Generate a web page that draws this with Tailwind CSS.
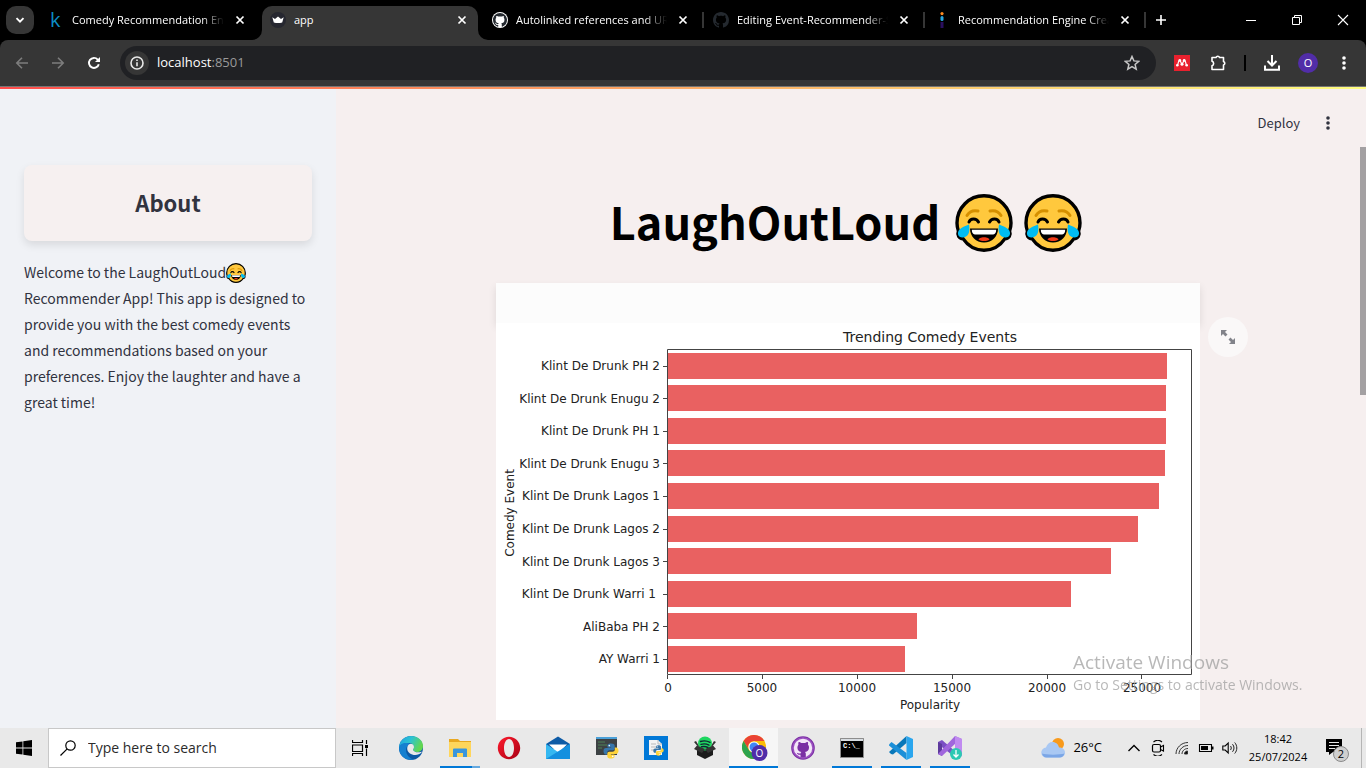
<!DOCTYPE html>
<html lang="en">
<head>
<meta charset="utf-8">
<meta name="viewport" content="width=device-width, initial-scale=1">
<title>app</title>
<script src="https://cdn.jsdelivr.net/npm/@tailwindcss/browser@4"></script>
</head>
<body class="flex h-screen flex-col overflow-hidden bg-black font-['Open_Sans',sans-serif] text-[11px] text-white">

<!-- Shared symbols -->
<svg class="hidden" aria-hidden="true">
  <symbol id="joy" viewBox="0 0 58 58">
    <path d="M29 1.800C14 1.800 2 13.800 2 29c0 3 .5 5.500 1.400 8-1.500 4 .6 7.500 4.600 7.600C13 52 20.500 56.200 29 56.200S45 52 50 44.600c4-.1 6.100-3.600 4.600-7.600.9-2.500 1.400-5 1.400-8C56 13.800 44 1.800 29 1.800Z" fill="#ffc83d" stroke="#000" stroke-width="3.400"/>
    <g fill="none" stroke-linecap="round">
      <path d="M12 21.500c2-3.500 6-5.500 11-4.500M46 21.500c-2-3.500-6-5.500-11-4.500" stroke="#d69000" stroke-width="3"/>
      <path d="M14 28c1.500-4 7.500-4 9.500 0M34.500 28c2-4 8-4 9.500 0" stroke="#000" stroke-width="3"/>
    </g>
    <path d="M14 30.500c1.500 8-1 13-6.500 13-4.500 0-6-4.500-3-8 2.500-2.500 5-3 9.500-5ZM44 30.500c-1.500 8 1 13 6.500 13 4.500 0 6-4.500 3-8-2.500-2.500-5-3-9.500-5Z" fill="#00bcf2"/>
    <path d="M15 34.500h28c0 8-6 14-14 14s-14-6-14-14Z" fill="#000"/>
    <path d="M16.800 35.800h24.400c0 2.800-1 4.600-3 4.600H19.800c-2 0-3-1.800-3-4.600Z" fill="#fff"/>
    <path d="M29 43.200c3 0 5.500 1.300 5.500 2.400-1.500 1-3.500 1.500-5.500 1.500s-4-.5-5.500-1.500C23.500 44.500 26 43.200 29 43.200Z" fill="#f03a17"/>
  </symbol>
  <symbol id="octo" viewBox="0 0 16 16">
    <path fill="currentColor" d="M8 0C3.580 0 0 3.580 0 8c0 3.540 2.290 6.530 5.470 7.590.4.07.55-.17.55-.38 0-.19-.01-.82-.01-1.490-2.010.37-2.530-.49-2.690-.94-.09-.23-.48-.94-.82-1.130-.28-.15-.68-.52-.01-.53.63-.01 1.080.58 1.230.82.72 1.210 1.870.87 2.330.66.07-.52.28-.87.51-1.070-1.780-.2-3.640-.89-3.640-3.950 0-.87.31-1.590.82-2.150-.08-.2-.36-1.020.08-2.120 0 0 .67-.21 2.200.82.64-.18 1.320-.27 2-.27.68 0 1.360.09 2 .27 1.530-1.040 2.200-.82 2.200-.82.44 1.100.16 1.920.08 2.120.51.56.82 1.270.82 2.150 0 3.070-1.870 3.750-3.650 3.950.29.25.54.73.54 1.480 0 1.070-.01 1.930-.01 2.200 0 .21.15.46.55.38A8.012 8.012 0 0 0 16 8c0-4.420-3.580-8-8-8Z"/>
  </symbol>
  <symbol id="x" viewBox="0 0 16 16"><path d="M4.500 4.500l7 7M11.500 4.500l-7 7" stroke="currentColor" stroke-width="1.700"/></symbol>
  <symbol id="dots" viewBox="0 0 16 16"><g fill="currentColor"><circle cx="8" cy="3" r="1.800"/><circle cx="8" cy="8" r="1.800"/><circle cx="8" cy="13" r="1.800"/></g></symbol>
  <symbol id="py" viewBox="0 0 16 16">
    <path d="M7.900.5c-3 0-3.400 1.200-3.400 2.300v1.700h3.600v.6H3C1.400 5.100.5 6.300.5 8.200s1 3.200 2.300 3.200h1.400V9.500c0-1.300 1-2.300 2.400-2.300h3.300c1 0 1.800-.8 1.800-1.900V2.800C11.700 1.300 10.300.5 7.900.5Z" fill="#3776ab"/>
    <path d="M8.100 15.500c3 0 3.400-1.200 3.400-2.300v-1.700H7.900v-.6H13c1.600 0 2.500-1.200 2.500-3.100s-1-3.200-2.300-3.200h-1.400v1.900c0 1.300-1 2.300-2.400 2.300H6.100c-1 0-1.800.8-1.800 1.900v2.500c0 1.500 1.400 2.300 3.800 2.300Z" fill="#ffd43b"/>
    <circle cx="6.300" cy="2.600" r=".8" fill="#fff"/><circle cx="9.700" cy="13.400" r=".8" fill="#fff"/>
  </symbol>
</svg>

<!-- Tab strip -->
<header class="flex h-10 shrink-0 items-stretch">
  <button aria-label="Search tabs" class="mt-[6px] ml-[6px] mr-[7px] flex size-7 shrink-0 items-center justify-center rounded-[10px] bg-[#363636]">
    <svg class="size-4" viewBox="0 0 16 16"><path d="M4.500 6.200 8 9.700l3.500-3.500" fill="none" stroke="#fff" stroke-width="1.900"/></svg>
  </button>
  <nav aria-label="Tabs" class="flex min-w-0 flex-1">
    <div class="relative flex max-w-[221px] min-w-0 flex-1 items-center gap-2 pl-[7px] pr-[14px]">
      <span class="w-4 shrink-0 pl-[2px] text-xl leading-6 font-medium text-[#0d8dc4]" aria-hidden="true">k</span>
      <a href="#" class="min-w-0 flex-1 overflow-hidden whitespace-nowrap [mask-image:linear-gradient(to_right,#000_85%,transparent)]">Comedy Recommendation Engine</a>
      <button aria-label="Close tab" class="size-4 shrink-0"><svg class="size-4"><use href="#x"/></svg></button>
    </div>
    <div class="flex max-w-[221px] min-w-0 flex-1 pt-[6px] pr-[5px]">
      <div class="relative flex min-w-0 flex-1 items-center gap-2 rounded-t-[10px] bg-[#363636] pb-[6px] pl-2 pr-[8px]">
        <svg class="absolute -left-[10px] bottom-0 size-[10px]" viewBox="0 0 10 10"><path d="M10 0v10H0A10 10 0 0 0 10 0Z" fill="#363636"/></svg>
        <svg class="absolute -right-[10px] bottom-0 size-[10px]" viewBox="0 0 10 10"><path d="M0 0v10h10A10 10 0 0 1 0 0Z" fill="#363636"/></svg>
        <svg class="size-4 shrink-0" viewBox="0 0 16 16"><circle cx="8" cy="8" r="8" fill="#262730"/><path d="M2.300 5.300 5 7l3-2.500L11 7l2.700-1.700-1.500 5.200c-2.700.8-5.700.8-8.400 0L2.300 5.300Z" fill="#fff"/></svg>
        <a href="#" aria-current="page" class="min-w-0 flex-1 overflow-hidden whitespace-nowrap">app</a>
        <button aria-label="Close tab" class="size-4 shrink-0"><svg class="size-4"><use href="#x"/></svg></button>
      </div>
    </div>
    <div class="relative flex max-w-[221px] min-w-0 flex-1 items-center gap-2 pl-[9px] pr-[13px]">
      <svg class="size-4 shrink-0 text-[#24292f]" viewBox="0 0 16 16"><circle cx="8" cy="8" r="8" fill="#fff"/><svg x="1" y="1" width="14" height="14"><use href="#octo"/></svg></svg>
      <a href="#" class="min-w-0 flex-1 overflow-hidden whitespace-nowrap [mask-image:linear-gradient(to_right,#000_85%,transparent)]">Autolinked references and URLs</a>
      <button aria-label="Close tab" class="size-4 shrink-0"><svg class="size-4"><use href="#x"/></svg></button>
      <span class="absolute right-0 top-3 h-4 w-[2px] bg-[#363636]"></span>
    </div>
    <div class="relative flex max-w-[221px] min-w-0 flex-1 items-center gap-2 pl-[9px] pr-[13px]">
      <svg class="size-4 shrink-0 text-[#24292f]"><use href="#octo"/></svg>
      <a href="#" class="min-w-0 flex-1 overflow-hidden whitespace-nowrap [mask-image:linear-gradient(to_right,#000_85%,transparent)]">Editing Event-Recommender-System</a>
      <button aria-label="Close tab" class="size-4 shrink-0"><svg class="size-4"><use href="#x"/></svg></button>
      <span class="absolute right-0 top-3 h-4 w-[2px] bg-[#363636]"></span>
    </div>
    <div class="relative flex max-w-[221px] min-w-0 flex-1 items-center gap-2 pl-[9px] pr-[13px]">
      <svg class="size-4 shrink-0" viewBox="0 0 16 16"><circle cx="8" cy="1.600" r="1.600" fill="#ff8a1f"/><rect x="6.500" y="4" width="3" height="5" rx="1.500" fill="#28a8e0"/><rect x="6.500" y="10" width="3" height="6" fill="#2a0f5e"/></svg>
      <a href="#" class="min-w-0 flex-1 overflow-hidden whitespace-nowrap [mask-image:linear-gradient(to_right,#000_85%,transparent)]">Recommendation Engine Creation</a>
      <button aria-label="Close tab" class="size-4 shrink-0"><svg class="size-4"><use href="#x"/></svg></button>
      <span class="absolute right-0 top-3 h-4 w-[2px] bg-[#363636]"></span>
    </div>
    <button aria-label="New tab" class="flex w-[30px] shrink-0 items-center justify-center"><svg class="size-4" viewBox="0 0 16 16"><path d="M8 3v10M3 8h10" stroke="#fff" stroke-width="1.600"/></svg></button>
  </nav>
  <button aria-label="Minimize" class="flex w-[46px] shrink-0 items-center justify-center"><svg class="size-4" viewBox="0 0 16 16"><path d="M3 8.500h10" stroke="#fff"/></svg></button>
  <button aria-label="Restore" class="flex w-[46px] shrink-0 items-center justify-center"><svg class="size-4" viewBox="0 0 16 16"><path d="M3.500 5.500h7v7h-7zM5.500 5.500v-2h7v7h-2" fill="none" stroke="#fff"/></svg></button>
  <button aria-label="Close" class="flex w-[46px] shrink-0 items-center justify-center"><svg class="size-4" viewBox="0 0 16 16"><path d="M3 3l10 10M13 3 3 13" stroke="#fff" stroke-width="1.100"/></svg></button>
</header>

<!-- Toolbar -->
<div class="flex h-[46px] shrink-0 items-center rounded-t-lg bg-[#363636] pl-1 pr-1">
  <button aria-label="Back" class="flex w-9 justify-center text-[#7d7d7d]"><svg class="size-4" viewBox="0 0 16 16"><path d="M14 8H3M8 2.800 2.800 8 8 13.200" fill="none" stroke="currentColor" stroke-width="1.600"/></svg></button>
  <button aria-label="Forward" class="flex w-9 justify-center text-[#7d7d7d]"><svg class="size-4" viewBox="0 0 16 16"><path d="M2 8h11M8 2.800 13.200 8 8 13.200" fill="none" stroke="currentColor" stroke-width="1.600"/></svg></button>
  <button aria-label="Reload" class="flex w-9 justify-center"><svg class="size-4" viewBox="0 0 16 16"><path d="M12.800 9.200A5 5 0 1 1 11.700 4.600l1 1" fill="none" stroke="#fff" stroke-width="1.900"/><path d="M14 2v5H9z" fill="#fff"/></svg></button>
  <div class="ml-2 flex h-[34px] min-w-0 flex-1 items-center rounded-full bg-[#202124] pl-[5px] pr-4">
    <button aria-label="Site information" class="flex size-6 shrink-0 items-center justify-center rounded-full bg-[#363636]"><svg class="size-4" viewBox="0 0 16 16"><circle cx="8" cy="8" r="6" fill="none" stroke="#e8e8e8" stroke-width="1.600"/><path d="M8 7.200v4M8 4.500V6" stroke="#e8e8e8" stroke-width="1.600"/></svg></button>
    <div class="ml-2 flex-1 text-[13px]">localhost<span class="text-[#9a9a9a]">:8501</span></div>
    <button aria-label="Bookmark this tab" class="size-4"><svg class="size-4" viewBox="0 0 16 16"><path d="m8 1.500 1.900 4.400 4.800.4-3.600 3.200 1.100 4.700L8 11.700l-4.200 2.500 1.100-4.700L1.300 6.300l4.800-.4z" fill="none" stroke="#c7c7c7" stroke-width="1.500"/></svg></button>
  </div>
  <button aria-label="Mendeley Web Importer" class="ml-2 flex w-9 justify-center"><svg class="size-4" viewBox="0 0 16 16"><rect width="16" height="16" fill="#e9212e"/><g fill="#fff"><circle cx="5.800" cy="5.400" r="1.400"/><circle cx="10.200" cy="5.400" r="1.400"/><circle cx="3.300" cy="10.300" r="1.300"/><circle cx="8" cy="9.300" r="1.500"/><circle cx="12.700" cy="10.300" r="1.300"/></g><path d="M3.300 10.300c1.200-.8.500-4.600 2.300-4.800C7 5.500 7 9 8 9s1-3.500 2.400-3.500c1.800.2 1.100 4 2.300 4.800" fill="none" stroke="#fff" stroke-width="1.200"/></svg></button>
  <button aria-label="Extensions" class="flex w-9 justify-center"><svg class="size-[18px]" viewBox="0 0 18 18"><path d="M3 3.500H7a1.900 1.900 0 0 1 3.600 0h3.900v4a1.900 1.900 0 0 1 0 3.600v4.400H3v-3.800a2.300 2.300 0 0 0 0-4.400z" fill="none" stroke="#fff" stroke-width="1.600" stroke-linejoin="round"/></svg></button>
  <span class="mx-2 h-4 w-[2px] bg-black"></span>
  <button aria-label="Downloads" class="flex w-9 justify-center"><svg class="size-[18px]" viewBox="0 0 18 18"><path d="M9 1v10M4.500 7 9 11.500 13.500 7M2 11.500v4.200h14v-4.200" fill="none" stroke="#fff" stroke-width="2"/></svg></button>
  <button aria-label="Profile" class="flex w-9 justify-center"><span class="flex size-5 items-center justify-center rounded-full bg-[#512da8] text-[11px] leading-5">O</span></button>
  <button aria-label="Chrome menu" class="flex w-9 justify-center"><svg class="size-4"><use href="#dots"/></svg></button>
</div>
<div class="h-px shrink-0 bg-[#757575]"></div>
<div class="h-[2px] shrink-0 bg-linear-to-r from-[#ff4b4b] to-[#fffd80]"></div>

<!-- App -->
<div class="flex min-h-0 flex-1 font-['Noto_Sans_CJK_SC',sans-serif] text-[#31333f]">
  <aside class="w-[336px] shrink-0 bg-[#f0f2f6] px-6 pt-[76px]">
    <h2 class="rounded-lg bg-[#f6f0f0] pt-[19px] pb-[21px] text-center text-[22px] leading-9 font-bold shadow-[0_4px_8px_rgba(0,0,0,0.1)]">About</h2>
    <p class="mt-[18px] text-sm leading-[26px]">Welcome to the LaughOutLoud<svg class="inline size-5 align-[-5px]" role="img" aria-label="Face with tears of joy"><use href="#joy"/></svg> Recommender App! This app is designed to provide you with the best comedy events and recommendations based on your preferences. Enjoy the laughter and have a great time!</p>
  </aside>
  <main class="relative min-w-0 flex-1 overflow-hidden bg-[#f6efef] pr-[6px]">
    <div class="absolute right-0 top-[58px] h-[248px] w-[6px] bg-[#a3a0a2]"></div>
    <div class="flex h-[68px] items-center justify-end gap-5 pr-6">
      <button class="text-[13px]">Deploy</button>
      <button aria-label="App menu" class="size-4"><svg class="size-4"><use href="#dots"/></svg></button>
    </div>
    <div class="mx-auto max-w-[704px]">
      <h1 class="mt-9 flex h-[60px] items-center justify-center gap-[11px] pr-1 text-[45px] leading-[56px] font-bold text-black"><span class="mr-1 pb-1">LaughOutLoud</span>
        <svg class="size-[58px]" role="img" aria-label="Face with tears of joy"><use href="#joy"/></svg>
        <svg class="size-[58px]" role="img" aria-label="Face with tears of joy"><use href="#joy"/></svg>
      </h1>
      <div class="mt-[30px] h-10 bg-[#fcfcfc] shadow-[0_4px_8px_rgba(0,0,0,0.1)]"></div>
      <div class="relative bg-white">
        <button aria-label="View fullscreen" class="absolute -right-12 -top-[6px] flex size-10 items-center justify-center rounded-full bg-[#faf8f8] text-[#82838a]"><svg class="size-4" viewBox="0 0 16 16"><path d="M1 1h6L5 3l2.500 2.500-2 2L3 5 1 7zM15 15H9l2-2-2.500-2.500 2-2L13 11l2-2z" fill="currentColor"/></svg></button>
        <svg class="block w-full font-['DejaVu_Sans',sans-serif] text-xs" viewBox="496 323 704 397" role="img" aria-label="Trending Comedy Events">
          <g fill="#e96161">
            <rect x="667" y="353" width="500" height="26"/><rect x="667" y="385" width="499" height="26"/><rect x="667" y="418" width="499" height="26"/><rect x="667" y="450" width="498" height="26"/><rect x="667" y="483" width="492" height="26"/><rect x="667" y="516" width="471" height="26"/><rect x="667" y="548" width="444" height="26"/><rect x="667" y="581" width="404" height="26"/><rect x="667" y="613" width="250" height="26"/><rect x="667" y="646" width="238" height="26"/>
          </g>
          <path d="M667.500 349.500h524v325h-524zM663 366.500h4M663 398.500h4M663 431.500h4M663 463.500h4M663 496.500h4M663 529.500h4M663 561.500h4M663 594.500h4M663 626.500h4M663 659.500h4M667.500 675v4M762.500 675v4M857.500 675v4M952.500 675v4M1047.500 675v4M1141.500 675v4" fill="none" stroke="#444"/>
          <g text-anchor="end" fill="#222">
            <text x="660" y="370">Klint De Drunk PH 2</text><text x="660" y="403">Klint De Drunk Enugu 2</text><text x="660" y="435">Klint De Drunk PH 1</text><text x="660" y="468">Klint De Drunk Enugu 3</text><text x="660" y="500">Klint De Drunk Lagos 1</text><text x="660" y="533">Klint De Drunk Lagos 2</text><text x="660" y="566">Klint De Drunk Lagos 3</text><text x="656" y="598">Klint De Drunk Warri 1</text><text x="660" y="631">AliBaba PH 2</text><text x="660" y="663">AY Warri 1</text>
          </g>
          <g text-anchor="middle" fill="#222">
            <text x="668" y="692">0</text><text x="762" y="692">5000</text><text x="857" y="692">10000</text><text x="952" y="692">15000</text><text x="1047" y="692">20000</text><text x="1142" y="692">25000</text>
            <text x="930" y="709">Popularity</text>
            <text transform="translate(514 513) rotate(-90)">Comedy Event</text>
            <text x="930" y="342" class="text-sm">Trending Comedy Events</text>
          </g>
        </svg>
      </div>
    </div>
  </main>
</div>

<!-- System watermark -->
<div class="pointer-events-none fixed right-[53px] bottom-[72px] w-60 font-['Open_Sans',sans-serif] text-[#9a9a9a]/70">
  <p class="text-[19px] leading-6">Activate Windows</p>
  <p class="text-sm leading-[22px]">Go to Settings to activate Windows.</p>
</div>

<!-- Taskbar -->
<footer class="flex h-10 shrink-0 items-stretch bg-[#e9e9e9] text-black">
  <button aria-label="Start" class="flex w-12 shrink-0 items-center justify-center"><svg class="size-4" viewBox="0 0 16 16"><path d="M0 2.300 6.500 1.400v6.200H0zM7.300 1.300 16 0v7.600H7.300zM0 8.400h6.500v6.200L0 13.700zM7.300 8.400H16V16l-8.700-1.300z"/></svg></button>
  <label class="flex w-72 shrink-0 items-center gap-3 border border-[#c8c8c8] bg-white pl-[11px]">
    <svg class="size-4 shrink-0" viewBox="0 0 16 16"><circle cx="10.500" cy="5.500" r="4.700" fill="none" stroke="#000" stroke-width="1.200"/><path d="M7.200 8.800.5 15.500" stroke="#000" stroke-width="1.200"/></svg>
    <input type="text" aria-label="Search" placeholder="Type here to search" class="min-w-0 flex-1 text-sm placeholder:text-[#2b2b2b]">
  </label>
  <button aria-label="Task view" class="flex w-12 shrink-0 items-center justify-center"><svg class="size-4" viewBox="0 0 16 16"><path d="M.5 0v2.500h10V0M.5 16v-2.500h10V16M.5 5h10v6.500H.5zM14.500 0v4M14.500 8.500V16" fill="none" stroke="#000" stroke-width="1.200"/><rect x="13" y="5" width="3" height="3"/></svg></button>
  <div class="ml-[2px] flex">
    <button aria-label="Edge" class="flex w-[49px] items-center justify-center"><svg class="size-6" viewBox="0 0 24 24"><defs><linearGradient id="eg" x1="0" y1="0" x2="1" y2=".4"><stop offset="0" stop-color="#1b9de2"/><stop offset=".5" stop-color="#2cc3d2"/><stop offset="1" stop-color="#62d750"/></linearGradient></defs><circle cx="12" cy="12" r="12" fill="#0c59a4"/><path d="M0 12C0 5 5.500 0 12 0c7 0 12 4.500 12 10 0 4-3 6-6 6-2.500 0-4-1-4-2s1-1.500 1-3c0-2.500-2.500-4-5.500-4C5 7 1 9 0 12Z" fill="url(#eg)"/><path d="M0 12c.5-3.500 4-5.500 8-5 2 .2 4 1 5 2-4-1-6 2-6 5 0 5 4 9 8 9.600C7 25 0 20 0 12Z" fill="#1580d0"/><path d="M15 11c0-2-1.500-3.200-3.300-3.200C9.500 8 8.200 10 8.200 12.500c0 4 4 6.500 8 6.500 2.500 0 4.800-1 6.300-2.500.4-.4.200-.8-.3-.7-3.200 1.300-8.200.2-8.200-2 0-.8 1-1.300 1-2.800Z" fill="#e9e9e9"/></svg></button>
    <button aria-label="File Explorer" class="relative flex w-[49px] items-center justify-center"><svg class="size-6" viewBox="0 0 24 24"><path d="M1 3h9l2 2h11v16H1z" fill="#e9a820"/><path d="M1 6h22v15H1z" fill="#ffd65c"/><path d="M5 13.500a1 1 0 0 1 1-1h12a1 1 0 0 1 1 1V21h-4v-4H9v4H5z" fill="#3a96dd"/></svg><span class="absolute bottom-0 flex h-[2px] w-10"><i class="flex-1 bg-[#0078d7]"></i><i class="w-2 bg-[#66a9df]"></i></span></button>
    <button aria-label="Opera" class="flex w-[49px] items-center justify-center"><svg class="size-6" viewBox="0 0 24 24"><defs><linearGradient id="og" x1="0" y1="0" x2="1" y2="1"><stop offset="0" stop-color="#ff1b2d"/><stop offset="1" stop-color="#a70014"/></linearGradient></defs><path fill="url(#og)" fill-rule="evenodd" d="M12 .8c6.200 0 11.200 5 11.200 11.200s-5 11.200-11.200 11.200S.8 18.200.8 12 5.800.8 12 .8Zm0 2.200C9 3 7 7 7 12s2 9 5 9 5-4 5-9-2-9-5-9Z"/></svg></button>
    <button aria-label="Mail" class="flex w-[49px] items-center justify-center"><svg class="size-6" viewBox="0 0 24 24"><path d="M0 8 12 .5 24 8v5H0z" fill="#0d5ba6"/><path d="M3 8.500h18L12 17z" fill="#fff"/><path d="M0 8l12 8 12-8v15H0z" fill="#35b8f1"/><path d="M0 23 24 8v15z" fill="#1490df"/></svg></button>
    <button aria-label="Python" class="flex w-[49px] items-center justify-center"><svg class="size-6" viewBox="0 0 24 24"><path d="M1 1h21v18H1z" fill="#3d4244"/><path d="M1 1h21v2H1z" fill="#4aa0d8"/><path d="M3 6h7M3 9h9M3 12h4" stroke="#4f8156"/><svg x="8" y="7" width="16" height="16"><use href="#py"/></svg></svg></button>
    <button aria-label="Python IDLE" class="flex w-[49px] items-center justify-center"><svg class="size-6" viewBox="0 0 24 24"><path d="M0 0h24v24H0z" fill="#0078d7"/><path d="M5 4h9l4 4v11H5z" fill="#f4f4f4"/><path d="M14 4v4h4M7 8h5M7 11h5M7 14h3" fill="none" stroke="#bbb"/><svg x="9" y="9" width="11" height="11"><use href="#py"/></svg></svg></button>
    <button aria-label="Spotify package" class="flex w-[49px] items-center justify-center"><svg class="size-6" viewBox="0 0 24 24"><path d="M4 10 12 14l8-4v9l-8 4-8-4z" fill="#1c1c1c"/><circle cx="12" cy="7.500" r="7" fill="#1ed760"/><path d="M7.500 5.500c3-1 6.500-.8 9.500.8M8 8.300c2.700-.8 5.500-.5 8 .8M8.500 10.800c2-.5 4.500-.3 6.500.7" fill="none" stroke="#123" stroke-width="1.400" stroke-linecap="round"/><path d="M4 9.500 12 13l-3 4-8-4zM20 9.500 12 13l3 4 8-4zM4 9.500 1 6l2-1 3 5zM20 9.500 23 6l-2-1-3 5z" fill="#333"/></svg></button>
    <button aria-label="Chrome" class="relative flex w-[49px] items-center justify-center border-b-2 border-[#0078d7] bg-[#f6f6f6] pt-[2px] pl-[2px]"><svg class="size-[26px]" viewBox="0 0 26 26"><circle cx="12" cy="12" r="12" fill="#fbbc05"/><path d="M1.600 6A12 12 0 0 1 22.400 6H12a6 6 0 0 0-5.300 8.500z" fill="#ea4335"/><path d="M1.600 6A12 12 0 0 0 12 24l5-9a6 6 0 0 1-10.300-.3z" fill="#2da44e"/><circle cx="12" cy="12" r="5.600" fill="#fff"/><circle cx="12" cy="12" r="4.500" fill="#4285f4"/><circle cx="17.500" cy="18" r="8" fill="#512da8"/><text x="17.500" y="21.500" text-anchor="middle" fill="#fff" class="text-[10px]">O</text></svg></button>
    <button aria-label="GitHub Desktop" class="flex w-[49px] items-center justify-center"><svg class="size-6" viewBox="0 0 24 24"><circle cx="12" cy="12" r="11" fill="#f3e6f8" stroke="#7b2fa4" stroke-width="1.600"/><path fill="#7b2fa4" d="M12 23a11 11 0 0 1-2.500-.5v-3.800c-2 .4-3-.4-3.700-2 1.500.1 1.700 1 3.800.7.1-.8.500-1 .8-1.400-2.700-.5-4-2-4-4.500 0-1.200.4-2 1-2.700-.2-.8-.2-1.800.2-2.800 1 0 2 .6 2.800 1.100a9 9 0 0 1 3.600 0c.8-.5 1.800-1.100 2.800-1.100.4 1 .4 2 .2 2.800.6.7 1 1.500 1 2.700 0 2.500-1.300 4-4 4.500.5.500.8 1 .8 2v4.500A11 11 0 0 1 12 23Z"/><circle cx="12" cy="12" r="10" fill="none" stroke="#9a4fc0" stroke-width="1.500"/></svg></button>
    <button aria-label="Command Prompt" class="relative flex w-[49px] items-center justify-center"><svg class="size-6" viewBox="0 0 24 24"><path d="M.5 2.500h23v19H.5z" fill="#000" stroke="#8d8d8d"/><path d="M1 3h22v2H1z" fill="#d8dde2"/><text x="3" y="12" fill="#fff" class="font-['Liberation_Mono',monospace] text-[7px] font-bold">C:\_</text></svg><span class="absolute bottom-0 h-[2px] w-10 bg-[#0078d7]"></span></button>
    <button aria-label="Visual Studio Code" class="relative flex w-[49px] items-center justify-center"><svg class="size-6" viewBox="0 0 24 24"><path d="M0 16 17.500 0v7L4 18.500 2 18z" fill="#0877b9"/><path d="M0 8.500 2.500 6 17.500 17v7L0 9.500z" fill="#1b8fd8"/><path d="M17.500 0 24 3v18l-6.500 3z" fill="#2aa6ee"/></svg><span class="absolute bottom-0 h-[2px] w-10 bg-[#0078d7]"></span></button>
    <button aria-label="Visual Studio Installer" class="relative flex w-[49px] items-center justify-center"><svg class="size-6" viewBox="0 0 24 24"><path d="M0 6 4 4l14 12v6L0 8z" fill="#7b4fc4"/><path d="M0 6v12l4 2V8z" fill="#5d3a9c"/><path d="M4 20 0 18 17 0l7 3v15l-6 5V7z" fill="#a066dd"/><path d="M17 0l7 3v17l-7 3z" fill="#c08af0"/><circle cx="18" cy="18" r="6" fill="#2cc9b3"/><path d="M18 14v7M15.500 18.500 18 21l2.500-2.500" fill="none" stroke="#fff" stroke-width="1.300"/></svg><span class="absolute bottom-0 h-[2px] w-10 bg-[#0078d7]"></span></button>
  </div>
  <div class="ml-auto flex items-center">
    <button class="flex items-center gap-2 text-[13px]"><svg class="h-6 w-6" viewBox="0 0 24 24"><circle cx="17" cy="8" r="6" fill="#f89a1c"/><path d="M5.500 21.500a5 5 0 0 1-.5-10c1-3.500 3.500-5.500 6.500-5.500 3.500 0 5.800 2.300 6.500 5.500 3.500 0 6 2 6 5s-2.500 5-5.500 5z" fill="#a9c8f3"/><path d="M5.500 21.500a5 5 0 0 1-4.500-4c4 1.500 18 1.500 22.500 0-.8 2.500-2.500 4-5 4z" fill="#7ba6e6"/></svg>26°C</button>
    <button aria-label="Show hidden icons" class="ml-5 w-6"><svg class="mx-auto size-4" viewBox="0 0 16 16"><path d="M2.500 11 8 5.500l5.500 5.500" fill="none" stroke="#000" stroke-width="1.400"/></svg></button>
    <button aria-label="Meet now" class="w-6"><svg class="mx-auto size-4" viewBox="0 0 16 16"><rect x="2.500" y="4.500" width="8" height="7.500" rx="1.500" fill="none" stroke="#000" stroke-width="1.200"/><path d="m10.500 7 3-1.500v5.500l-3-1.500M3.500 2C6 0 9.500 0 12 2M3.500 14.500c2.500 2 6 2 8.500 0" fill="none" stroke="#000" stroke-width="1.100"/></svg></button>
    <button aria-label="Wi-Fi" class="w-6"><svg class="mx-auto size-4" viewBox="0 0 16 16" fill="none" stroke="#333"><path d="M2 14C2 8 7 2.500 14 2.500M5 14c0-4.500 4-8.500 9-8.500M8 14c0-3 2.500-5.500 6-5.500" /><path d="M10.500 14c0-1.500 1-3 3-3v3z" fill="#000"/></svg></button>
    <button aria-label="Battery" class="w-6"><svg class="mx-auto size-4" viewBox="0 0 16 16"><path d="M1.500 4.500h12v7h-12z" fill="none" stroke="#000" stroke-width="1.100"/><path d="M3 6h7v4H3zM14 6.500h1.500v3H14z"/></svg></button>
    <button aria-label="Volume" class="w-6"><svg class="mx-auto size-4" viewBox="0 0 16 16"><path d="M.8 6v4h2.400l3 3V3l-3 3z" fill="none" stroke="#000" stroke-width="1.100"/><path d="M8.500 6c1 1.200 1 2.800 0 4M10.500 4.200c2 2.200 2 5.400 0 7.600M12.700 2.500c2.800 3.200 2.800 7.800 0 11" fill="none" stroke="#222"/></svg></button>
    <button class="w-[72px] text-center text-[11px] leading-[18px]">18:42<br>25/07/2024</button>
    <button aria-label="Notifications, 2 new" class="ml-[9px] mr-2 w-[30px]"><svg class="h-7 w-[30px]" viewBox="0 0 30 28"><path d="M3 5h16v13h-9l-4 3v-3H3z"/><path d="M6 8.500h10M6 11.500h10M6 14.500h6" stroke="#e9e9e9"/><circle cx="18" cy="20" r="7.500" fill="#cfcfcf" stroke="#8a8a8a"/><text x="18" y="24" text-anchor="middle" class="text-[11px]">2</text></svg></button>
    <span class="mr-1 h-10 w-px bg-[#b5b5b5]"></span>
  </div>
</footer>
</body>
</html>
